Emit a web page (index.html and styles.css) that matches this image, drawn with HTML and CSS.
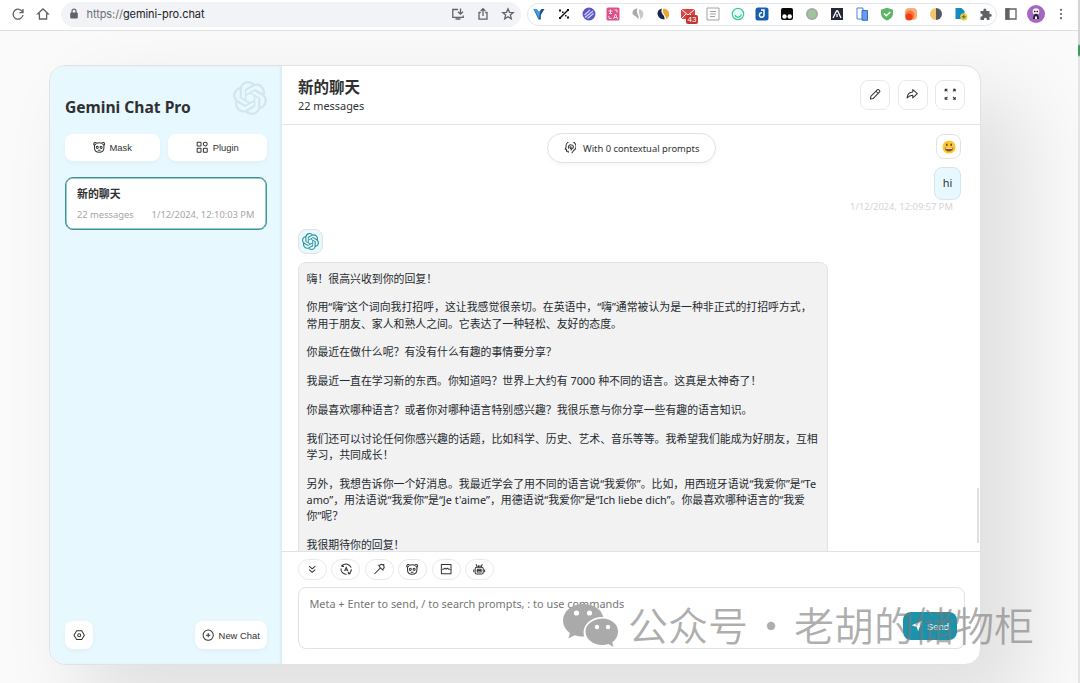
FILE: index.html
```html
<!DOCTYPE html>
<html lang="zh">
<head>
  <meta charset="utf-8">
  <title>Gemini Chat Pro</title>
  <link rel="stylesheet" href="styles.css">
</head>
<body>
  <svg class="sprite" xmlns="http://www.w3.org/2000/svg">
    <symbol id="logo" viewBox="0 0 24 24">
      <path fill="currentColor" d="M22.2819 9.8211a5.9847 5.9847 0 0 0-.5157-4.9108 6.0462 6.0462 0 0 0-6.5098-2.9A6.0651 6.0651 0 0 0 4.9807 4.1818a5.9847 5.9847 0 0 0-3.9977 2.9 6.0462 6.0462 0 0 0 .7427 7.0966 5.98 5.98 0 0 0 .511 4.9107 6.051 6.051 0 0 0 6.5146 2.9001A5.9847 5.9847 0 0 0 13.2599 24a6.0557 6.0557 0 0 0 5.7718-4.2058 5.9894 5.9894 0 0 0 3.9977-2.9001 6.0557 6.0557 0 0 0-.7475-7.0729zm-9.022 12.6081a4.4755 4.4755 0 0 1-2.8764-1.0408l.1419-.0804 4.7783-2.7582a.7948.7948 0 0 0 .3927-.6813v-6.7369l2.02 1.1686a.071.071 0 0 1 .038.052v5.5826a4.504 4.504 0 0 1-4.4945 4.4944zm-9.6607-4.1254a4.4708 4.4708 0 0 1-.5346-3.0137l.142.0852 4.783 2.7582a.7712.7712 0 0 0 .7806 0l5.8428-3.3685v2.3324a.0804.0804 0 0 1-.0332.0615L9.74 19.9502a4.4992 4.4992 0 0 1-6.1408-1.6464zM2.3408 7.8956a4.485 4.485 0 0 1 2.3655-1.9728V11.6a.7664.7664 0 0 0 .3879.6765l5.8144 3.3543-2.0201 1.1685a.0757.0757 0 0 1-.071 0l-4.8303-2.7865A4.504 4.504 0 0 1 2.3408 7.872zm16.5963 3.8558L13.1038 8.364 15.1192 7.2a.0757.0757 0 0 1 .071 0l4.8303 2.7913a4.4944 4.4944 0 0 1-.6765 8.1042v-5.6772a.79.79 0 0 0-.407-.667zm2.0107-3.0231l-.142-.0852-4.7735-2.7818a.7759.7759 0 0 0-.7854 0L9.409 9.2297V6.8974a.0662.0662 0 0 1 .0284-.0615l4.8303-2.7866a4.4992 4.4992 0 0 1 6.6802 4.66zM8.3065 12.863l-2.02-1.1638a.0804.0804 0 0 1-.038-.0567V6.0742a4.4992 4.4992 0 0 1 7.3757-3.4537l-.142.0805L8.704 5.459a.7948.7948 0 0 0-.3927.6813zm1.0976-2.3654l2.602-1.4998 2.6069 1.4998v2.9994l-2.5974 1.4997-2.6067-1.4997Z"/>
    </symbol>
    <symbol id="mask" viewBox="0 0 16 16">
      <path d="M1.900 5.500C.3 4.300 1 1.800 2.900 1.800c1 0 1.600.5 1.900 1 2-.8 4.400-.8 6.400 0 .3-.5.9-1 1.900-1 1.900 0 2.600 2.500 1 3.700M1.900 5.500v3.200c0 3.600 2.800 5.800 6.100 5.800s6.100-2.200 6.100-5.800V5.500M1.900 5.500l1.800-1.700M14.100 5.500l-1.800-1.700"/>
      <path d="M4.200 8.500c0-1 .6-1.600 1.400-1.600S6.900 7.500 6.800 8.300c-.1.900-.8 1.300-1.500 1.300-.6 0-1.100-.4-1.100-1.100zM11.800 8.500c0-1-.6-1.600-1.400-1.600S9.100 7.500 9.200 8.300c.1.900.8 1.300 1.500 1.300.6 0 1.100-.4 1.100-1.100zM6.300 11.800h3.400"/>
    </symbol>
  </svg>

  <header class="browser-bar">
    <svg class="bar-icon" viewBox="0 0 14 14"><path d="M11.700 5.300A5 5 0 1 0 12 8M12 2v3.600H8.400"/></svg>
    <svg class="bar-icon" viewBox="0 0 14 14"><path d="M1.800 6.800 7 2l5.200 4.800H10.600V12H3.400V6.800z"/></svg>
    <div class="omnibox">
      <svg class="lock" viewBox="0 0 10 12"><rect x="1.200" y="4.500" width="7.600" height="6" rx="1" fill="#5f6368"/><path d="M3 5V3.200a2 2 0 0 1 4 0V5" fill="none" stroke="#5f6368" stroke-width="1.200"/></svg>
      <span class="url"><span>https://</span>gemini-pro.chat</span>
      <div class="omnibox-icons">
        <svg class="bar-icon" viewBox="0 0 14 14"><path d="M7 2.500H1.800v7.800h10.400V8.500M4.500 12h5M9.500 1.500v5.300M7 4.700l2.500 2.500L12 4.700"/></svg>
        <svg class="bar-icon" viewBox="0 0 14 14"><path d="M4.800 5.500H3v6.700h8V5.500H9.200M7 9V1.800M4.700 4 7 1.700 9.300 4"/></svg>
        <svg class="bar-icon" viewBox="0 0 14 14"><path d="m7 1.800 1.500 3.500 3.800.3-2.900 2.500.9 3.700L7 9.800l-3.300 2 .9-3.700-2.900-2.500 3.800-.3z"/></svg>
      </div>
    </div>
    <div class="extensions">
      <svg viewBox="0 0 14 14"><path d="M1.500 2h3L7 5l2.500-3h3L8.800 8v4.500H6.500z" fill="#1d4f8c"/><path d="M1.500 2h3L7 5l2-2.400L7.500 8 7 12.500 5 8z" fill="#3f9de0"/></svg>
      <svg viewBox="0 0 14 14"><path d="m3 11 8-8" stroke="#111" stroke-width="1.500"/><path d="M2 2.500h2v2H2zM10 9.500h2v2h-2zM10 2h2v2h-2zM2 10h2v2H2zM5 4.500h1.500V6H5zM8 8h1.500v1.500H8z" fill="#111"/></svg>
      <svg viewBox="0 0 14 14"><circle cx="7" cy="7" r="6.500" fill="#5b55c8"/><path d="m2.500 8 5.500-5M3 10.500 11 4M5.500 11.500l6-5" stroke="#d9d6ff" stroke-width="1.100"/></svg>
      <svg viewBox="0 0 14 14"><rect x=".5" y=".5" width="13" height="13" rx="1.500" fill="#dc5288"/><path d="M2.500 4h4M4.500 2.500V7M3 6.500h3M8.500 3H11v2.500M3 9v2.500h2.500M7.500 12l2-5 2 5M8.200 10.500h2.600" stroke="#fbdbe8" fill="none"/></svg>
      <svg viewBox="0 0 14 14"><path d="M6.500 1.500C3 1.500 1.500 4 1.500 6c0 3 5 2.500 5.500 6.500C9.500 8.500 4 6.500 6.500 1.500z" fill="#aaa"/><path d="M8.500 2c4.500 1 5.500 8 .5 10.500 1.500-4.500-3-6-.5-10.500z" fill="#c8c8c8"/></svg>
      <svg viewBox="0 0 14 14"><path d="M6 1.500C3 2 1.500 4 1.500 6.500c0 3 3 6 7 6C9.500 8 3.500 6.500 6 1.500z" fill="#18264d"/><path d="M7.500 1.500c6.500.5 7.500 8.500 2.500 10.500C10.500 8 5 6.500 7.500 1.500z" fill="#eba62f"/></svg>
      <span class="mail">
        <svg viewBox="0 0 14 14"><path d="M0 2h14v10H0z" fill="#df4540"/><path d="m0 2 7 6 7-6M0 12l5-5M14 12 9 7" stroke="#fff" fill="none"/></svg>
        <b>43</b>
      </span>
      <svg viewBox="0 0 14 14"><path d="M1 1h12v12H1zM4 4.500h6M4 7h6M4 9.500h5" stroke="#a2a2a2" fill="none"/></svg>
      <svg viewBox="0 0 14 14"><circle cx="7" cy="7" r="5.700" fill="#ecfff8" stroke="#3bc99b" stroke-width="1.200"/><path d="M4 8c1 3 5 3 6.500-.5" stroke="#3bc99b" fill="none" stroke-width="1.400"/></svg>
      <svg viewBox="0 0 14 14"><rect x=".5" y=".5" width="13" height="13" rx="2.500" fill="#155fae"/><path d="M6 3h3v5a2.300 2.300 0 1 1-2-2.300" stroke="#fff" stroke-width="1.500" fill="none"/></svg>
      <svg viewBox="0 0 14 14"><rect x="1" y="1" width="12" height="12" rx="2" fill="#090909"/><circle cx="4.500" cy="9.500" r="2.200" fill="#fff"/><circle cx="9.700" cy="9.500" r="2.200" fill="#fff"/></svg>
      <svg viewBox="0 0 14 14"><circle cx="7" cy="7" r="6" fill="#a8aaa8"/><circle cx="7" cy="7" r="4" fill="#a0c59b"/></svg>
      <svg viewBox="0 0 14 14"><path d="M1 1h12v12H1z" fill="#222938"/><path d="m3 11 3.500-7h1.200l3.300 7M7 7v3" stroke="#fff" stroke-width="1.300" fill="none"/></svg>
      <svg viewBox="0 0 14 14"><path d="M2 1h6v11H2z" fill="#fff" stroke="#4e80d8"/><path d="M7 3.500h5.500v9.800H7z" fill="#679eed" stroke="#376bc4"/></svg>
      <svg viewBox="0 0 14 14"><path d="m7 .8 6 2V6c0 4-2.500 6-6 7.500C3.500 12 1 10 1 6V2.800z" fill="#5db568"/><path d="m4 6.500 2.300 2.300L10.300 5" stroke="#fff" stroke-width="1.500" fill="none"/></svg>
      <svg viewBox="0 0 14 14"><rect x="1" y="1" width="12" height="12" rx="4" fill="#f8ac7b"/><circle cx="6" cy="8" r="4.500" fill="#ff733f"/><circle cx="5" cy="10" r="3.500" fill="#ed3d12"/></svg>
      <svg viewBox="0 0 14 14"><path d="M7 1a6 6 0 0 0 0 12z" fill="#f3c66c"/><path d="M7 1a6 6 0 0 1 0 12z" fill="#55585d"/></svg>
      <svg viewBox="0 0 14 14"><path d="M1.500 1h6l3 3v8h-9z" fill="#168bbd"/><circle cx="9.800" cy="9.800" r="3.600" fill="#e4cf47"/><path d="M9.800 7.800v4M7.800 9.800h4" stroke="#536b37"/></svg>
      <svg viewBox="0 0 14 14"><path d="M1.500 4h3c-1-3.500 3.600-3.500 2.800 0h3.200v3c3-.8 3 3.300 0 2.700V13H7.800c.5-3-3.300-3-2.800 0H1.500V9.500c2.800.6 2.800-3.300 0-2.700z" fill="#5f6368"/></svg>
    </div>
    <svg class="bar-icon" viewBox="0 0 14 14"><path d="M2 2h10v10H2z"/><path d="M2 2h3v10H2z" fill="#5f6368"/></svg>
    <svg class="avatar" viewBox="0 0 18 18"><circle cx="9" cy="9" r="9" fill="#a567c3"/><circle cx="9" cy="6.500" r="3.300" fill="#eee"/><path d="M6 14c0-7 6-7 6 0z" fill="#252129"/><path d="M8 11.500h2V14H8z" fill="#fff"/><circle cx="7.800" cy="6.500" r=".8"/><circle cx="10.300" cy="6.500" r=".8"/></svg>
    <svg class="bar-icon" viewBox="0 0 14 14"><g fill="#5f6368" stroke="none"><circle cx="7" cy="2.800" r="1.100"/><circle cx="7" cy="7" r="1.100"/><circle cx="7" cy="11.200" r="1.100"/></g></svg>
  </header>

  <main class="page">
    <div class="window">
      <aside class="sidebar">
        <div class="sidebar-header">
          <h1>Gemini Chat Pro</h1>
          <svg class="sidebar-logo"><use href="#logo"/></svg>
        </div>
        <div class="sidebar-bar">
          <button class="mask-button"><svg class="icon"><use href="#mask"/></svg>Mask</button>
          <button class="plugin-button"><svg class="icon" viewBox="0 0 16 16"><rect x="1.500" y="1.500" width="5" height="5" rx=".6"/><circle cx="12" cy="4" r="2.500"/><rect x="1.500" y="9.500" width="5" height="5" rx=".6"/><rect x="9.500" y="9.500" width="5" height="5" rx=".6"/></svg>Plugin</button>
        </div>
        <div class="chat-item">
          <div class="chat-item-title">新的聊天</div>
          <div class="chat-item-info"><span>22 messages</span><span>1/12/2024, 12:10:03 PM</span></div>
        </div>
        <div class="sidebar-tail">
          <button class="settings"><svg class="icon" viewBox="0 0 16 16"><path d="M4.700 2.300h6.600L14.700 8l-3.400 5.700H4.700L1.300 8z"/><circle cx="8" cy="8" r="2"/></svg></button>
          <button class="new-chat"><svg class="icon" viewBox="0 0 16 16"><circle cx="8" cy="8" r="6.600"/><path d="M8 5.200v5.600M5.200 8h5.600"/></svg>New Chat</button>
        </div>
      </aside>

      <section class="chat">
        <div class="chat-header">
          <div>
            <h2>新的聊天</h2>
            <p>22 messages</p>
          </div>
          <div class="actions">
            <button><svg class="icon" viewBox="0 0 16 16"><path d="m1.800 14.200.6-3.500 8.500-8.500c.5-.5 1-.5 1.500 0l1.400 1.400c.5.5.5 1 0 1.500l-8.500 8.500zM9 4.200 11.800 7"/></svg></button>
            <button><svg class="icon" viewBox="0 0 16 16"><path d="M8.700 2v3.200C4 5.500 1.700 8.700 1.400 13c2-2.600 4-3.500 7.300-3.500v3.300l6-5.400z"/></svg></button>
            <button><svg class="icon" viewBox="0 0 16 16"><path d="M1.500 4.500v-3h3M11.500 1.500h3v3M14.500 11.500v3h-3M4.500 14.500h-3v-3M1.500 1.500l3 3M14.500 1.500l-3 3M14.500 14.500l-3-3M1.500 14.500l3-3"/></svg></button>
          </div>
        </div>

        <div class="chat-body">
          <button class="context-prompts"><svg class="icon" viewBox="0 0 16 16"><path d="M5.500 14v-2H3.200V9.500H1.500l1.200-3A6.400 6.400 0 1 1 12.500 11L10 14.500"/><path d="M8.800 11 11 7.500M6 8.500C4.500 5 7.500 3.300 9 3.500c4 .2 4 4.500 1.500 5C8 9 7 7.500 8 6l2 1"/></svg>With 0 contextual prompts</button>
          <div class="user-message">
            <div class="user-avatar">
              <svg viewBox="0 0 16 16"><circle cx="8" cy="8" r="7.500" fill="#fbc738"/><ellipse cx="5.500" cy="5.500" rx=".9" ry="1.600" fill="#643b14"/><ellipse cx="10.500" cy="5.500" rx=".9" ry="1.600" fill="#643b14"/><path d="M3 8.500c3 .8 7 .8 10 0 0 6-10 6-10 0z" fill="#8a5318"/><path d="M4 9c2.500.6 5.500.6 8 0v.9c-2.500.5-5.500.5-8 0z" fill="#fff"/></svg>
            </div>
            <div class="user-text">hi</div>
            <div class="message-date">1/12/2024, 12:09:57 PM</div>
          </div>
          <div class="bot-avatar"><svg><use href="#logo"/></svg></div>
          <div class="bot-text">
            <p>嗨！很高兴收到你的回复！</p>
            <p>你用“嗨”这个词向我打招呼，这让我感觉很亲切。在英语中，“嗨”通常被认为是一种非正式的打招呼方式，<br>常用于朋友、家人和熟人之间。它表达了一种轻松、友好的态度。</p>
            <p>你最近在做什么呢？有没有什么有趣的事情要分享？</p>
            <p>我最近一直在学习新的东西。你知道吗？世界上大约有 7000 种不同的语言。这真是太神奇了！</p>
            <p>你最喜欢哪种语言？或者你对哪种语言特别感兴趣？我很乐意与你分享一些有趣的语言知识。</p>
            <p>我们还可以讨论任何你感兴趣的话题，比如科学、历史、艺术、音乐等等。我希望我们能成为好朋友，互相<br>学习，共同成长！</p>
            <p>另外，我想告诉你一个好消息。我最近学会了用不同的语言说“我爱你”。比如，用西班牙语说“我爱你”是“Te<br>amo”，用法语说“我爱你”是“Je t'aime”，用德语说“我爱你”是“Ich liebe dich”。你最喜欢哪种语言的“我爱<br>你”呢？</p>
            <p>我很期待你的回复！</p>
          </div>
          <div class="scrollbar"></div>
        </div>

        <div class="input-panel">
          <div class="input-actions">
            <button><svg class="icon" viewBox="0 0 16 16"><path d="m4 4 4 3.500L12 4M4 8.500 8 12l4-3.500"/></svg></button>
            <button><svg class="icon" viewBox="0 0 16 16"><path d="M2.500 4.300a6.600 6.600 0 0 1 11.800 1.800M14.600 8a6.600 6.600 0 0 1-3.800 6M8.500 14.600A6.600 6.600 0 0 1 1.400 7M2.500 1.800v2.700h2.700M13.600 13.800h-2.800v-2.500M5.900 10.500 8 5.300l2.100 5.200M6.600 9h2.800"/></svg></button>
            <button><svg class="icon" viewBox="0 0 16 16"><path d="m1.800 14.200 7.500-7.500M8 4.500A3.200 3.200 0 1 1 11.500 8.300M8 4.500l3.500 3.800M10.500 1v1.200M6.300 2.500l.9.900M14.500 1.500l-1 1M15 5.800h-1.200M13.500 9.700l-.9-.9"/></svg></button>
            <button><svg class="icon"><use href="#mask"/></svg></button>
            <button><svg class="icon" viewBox="0 0 16 16"><path d="M1.800 7V2h12.400v5M1.800 9v5h12.400V9M.8 8h4l1.600-1.200L8 8l1.600-1.200L11.200 8h4"/></svg></button>
            <button><svg class="icon" viewBox="0 0 16 16"><rect x="2.800" y="5.500" width="10.400" height="8.700" rx="2"/><path d="M5.500 5.500 4 1.500M10.500 5.500l1.500-4M7.200 5.500V3M9 5.500V3M1 8.500v3.500M15 8.500v3.500M5.500 8h5v3.500h-5zM5.500 9.700h5"/></svg></button>
          </div>
          <div class="input-box">
            <span>Meta + Enter to send, / to search prompts, : to use commands</span>
            <button class="send"><svg viewBox="0 0 16 16"><path d="M1 7 15 1 9.500 15 7.500 9z" fill="#fff"/></svg>Send</button>
          </div>
        </div>
      </section>
    </div>
  </main>

  <div class="watermark">
    <svg viewBox="0 0 56 46"><path d="M21 1C9.500 1 1 8.500 1 17.500c0 5 2.800 9.500 7 12.500l-1.700 5.500 6.500-3.300c2.500.8 5 1.300 8 1.300h1.500C19 24 28 13.200 41.300 14 39.500 6 31 1 21 1z"/><path d="M56 28.500C56 21 49 15.500 40.500 15.500S23.500 21 23.500 28.500s7.500 13.500 17 13.500c2.200 0 4.200-.3 6-.9l5 3-1.300-4.800c3.500-2.500 5.800-6.500 5.800-10.800z"/><g fill="#fff"><circle cx="14.500" cy="10" r="2.600"/><circle cx="27.500" cy="10" r="2.600"/><circle cx="35" cy="24" r="2.200"/><circle cx="46" cy="24" r="2.200"/></g></svg>
    <span>公众号</span><i>·</i><span>老胡的储物柜</span>
  </div>
  <div class="page-edge"></div>
</body>
</html>
```
FILE: styles.css
```css
:root {
  --primary: #1d93ab;
  --second: #e7f8ff;
  --text: #303030;
  --border: #e2e2e2;
  --shadow: 0 2px 4px rgba(0, 0, 0, 0.04);
  --font: "Noto Sans", "Noto Sans CJK SC", sans-serif;
}

* {
  margin: 0;
  padding: 0;
  box-sizing: border-box;
}

body {
  display: flex;
  flex-direction: column;
  width: 1080px;
  height: 683px;
  overflow: hidden;
  position: relative;
  font-family: var(--font);
  color: var(--text);
  background: #fafafa;
}

button {
  display: flex;
  align-items: center;
  justify-content: center;
  font-family: "Liberation Sans", Arial, sans-serif;
  font-size: 9.4px;
  color: var(--text);
  background: #fff;
  border: none;
  border-radius: 8px;
}

.sprite {
  position: absolute;
  width: 0;
  height: 0;
}

.icon {
  width: 12.4px;
  height: 12.4px;
  flex: none;
  fill: none;
  stroke: #333;
  stroke-width: 1.3;
  stroke-linejoin: round;
}

/* browser toolbar */
.browser-bar {
  display: flex;
  align-items: center;
  height: 31px;
  flex: none;
  padding: 0 12px 2px 11px;
  background: #fff;
  border-bottom: 1px solid #dde1e3;
}

.bar-icon {
  width: 14px;
  height: 14px;
  flex: none;
  fill: none;
  stroke: #5f6368;
  stroke-width: 1.3;
  margin-right: 11px;
}

.omnibox {
  display: flex;
  align-items: center;
  width: 460px;
  height: 25px;
  padding: 0 6px 0 8px;
  background: #f2f3f7;
  border-radius: 13px;
}

.lock {
  width: 10px;
  height: 12px;
  margin-right: 7.5px;
}

.url {
  font: 11px Inter, sans-serif;
  color: #202124;
  letter-spacing: -0.08px;
}

.url span {
  color: #6b6f74;
}

.omnibox-icons {
  display: flex;
  gap: 11px;
  margin-left: auto;
}

.omnibox-icons .bar-icon {
  margin: 0;
}

.extensions {
  display: flex;
  align-items: center;
  justify-content: space-between;
  width: 470px;
  height: 23px;
  margin: 0 7px 0 6px;
  padding: 0 3px 0 4px;
  border: 1px solid #e2e5ea;
  border-radius: 12px;
}

.extensions svg {
  display: block;
  width: 14px;
  height: 14px;
}

.mail {
  position: relative;
}

.mail b {
  position: absolute;
  left: 5px;
  top: 8px;
  padding: 0 1.5px;
  font: 8px/9px "Liberation Sans", sans-serif;
  color: #fff;
  background: #c5352f;
  border-radius: 2px;
}

.avatar {
  width: 18px;
  height: 18px;
  flex: none;
  margin: 0 9px 0 -2px;
}

.browser-bar > .bar-icon:last-child {
  margin: 0;
}

/* app window */
.page {
  flex: 1;
  min-height: 0;
  padding: 34px 0 0 49px;
  overflow: hidden;
}

.window {
  display: flex;
  width: 932px;
  height: 600px;
  border: 1px solid var(--border);
  border-radius: 16px;
  background: #fff;
  box-shadow: 39px 39px 78px 8px rgba(0, 0, 0, 0.1);
  overflow: hidden;
}

.sidebar {
  display: flex;
  flex-direction: column;
  width: 232px;
  padding: 15px;
  background: var(--second);
  box-shadow: inset -2px 0 2px rgba(0, 0, 0, 0.05);
}

.sidebar-header {
  display: flex;
  justify-content: space-between;
  height: 53px;
}

.sidebar-header h1 {
  padding-top: 15px;
  font-size: 15.6px;
  line-height: 22px;
  font-weight: 700;
}

.sidebar-logo {
  width: 34px;
  height: 34px;
  color: #d3e6ed;
}

.sidebar-bar {
  display: flex;
  gap: 8px;
  margin-bottom: 16px;
}

.sidebar-bar button {
  height: 27px;
  gap: 4px;
  box-shadow: var(--shadow);
}

.mask-button {
  width: 95px;
}

.plugin-button {
  flex: 1;
}

.chat-item {
  height: 53px;
  padding: 8px 11.5px 8px 11px;
  background: #fff;
  border: 1px solid #3c9396;
  border-radius: 8px;
  box-shadow: inset 0 0 0 0.5px #3c9396;
}

.chat-item-title {
  font-size: 10.9px;
  line-height: 16px;
  font-weight: 700;
}

.chat-item-info {
  display: flex;
  justify-content: space-between;
  margin-top: 6px;
  font-size: 9.35px;
  line-height: 13px;
  color: #a6a6a6;
  white-space: nowrap;
}

.sidebar-tail {
  display: flex;
  justify-content: space-between;
  margin-top: auto;
}

.sidebar-tail button {
  height: 28px;
  box-shadow: var(--shadow);
}

.settings {
  width: 28px;
}

.new-chat {
  width: 72px;
  gap: 4px;
}

/* chat column */
.chat {
  display: flex;
  flex-direction: column;
  flex: 1;
  min-width: 0;
}

.chat-header {
  display: flex;
  align-items: center;
  justify-content: space-between;
  height: 59px;
  flex: none;
  padding: 0 15px 1px 16px;
  border-bottom: 1px solid #e5e5e5;
}

.chat-header h2 {
  padding-top: 1px;
  font-size: 15.5px;
  line-height: 21px;
}

.chat-header p {
  font-size: 10.9px;
  line-height: 16px;
}

.actions {
  display: flex;
  gap: 7.5px;
}

.actions button {
  width: 30px;
  height: 30px;
  border: 1px solid #e8e8e8;
}

.chat-body {
  position: relative;
  display: flex;
  flex-direction: column;
  height: 426px;
  flex: none;
  padding: 8px 19px 0 16px;
  overflow: hidden;
}

.context-prompts {
  align-self: center;
  width: 169px;
  height: 30px;
  flex: none;
  gap: 7px;
  margin-left: 4px;
  font-family: var(--font);
  font-size: 9.35px;
  border: 1px solid var(--border);
  border-radius: 15px;
  box-shadow: var(--shadow);
}

.user-message {
  display: flex;
  flex-direction: column;
  align-items: flex-end;
  margin-top: -29px;
}

.user-avatar,
.bot-avatar {
  display: flex;
  align-items: center;
  justify-content: center;
  width: 25px;
  height: 25px;
  flex: none;
  border: 1px solid var(--border);
  border-radius: 8px;
}

.user-avatar svg {
  width: 14px;
  height: 14px;
}

.user-text {
  margin-top: 8px;
  padding: 7px 7.8px 8px;
  font-size: 10.9px;
  line-height: 16px;
  background: var(--second);
  border: 1px solid #d4e5ec;
  border-radius: 8px;
}

.message-date {
  padding-right: 8px;
  font-size: 9.35px;
  line-height: 14px;
  color: #d4d4d4;
}

.bot-avatar {
  margin-top: 15px;
  background: var(--second);
}

.bot-avatar svg {
  width: 17px;
  height: 17px;
  color: #28919a;
}

.bot-text {
  width: 530px;
  flex: none;
  margin-top: 8px;
  padding: 7.6px;
  font-size: 10.88px;
  line-height: 16.33px;
  white-space: nowrap;
  color: #24292f;
  background: #f2f2f2;
  border: 1px solid var(--border);
  border-radius: 8px;
}

.bot-text p {
  margin-bottom: 12.4px;
}

.scrollbar {
  position: absolute;
  right: 1px;
  top: 363px;
  width: 2px;
  height: 55px;
  background: #e0e0e0;
}

.input-panel {
  flex: 1;
  padding: 7px 15px 15px 16px;
  border-top: 1px solid var(--border);
}

.input-actions {
  display: flex;
  gap: 4.4px;
  margin-bottom: 7px;
}

.input-actions button {
  width: 29px;
  height: 21px;
  border: 1px solid #e8e8e8;
  border-radius: 11px;
}

.input-box {
  display: flex;
  align-items: flex-start;
  justify-content: space-between;
  height: 62px;
  padding: 8px 7px 8px 10.5px;
  font-size: 10.88px;
  line-height: 16px;
  color: #757575;
  border: 1px solid var(--border);
  border-radius: 8px;
}

.send {
  align-self: flex-end;
  width: 54px;
  height: 28px;
  gap: 4px;
  color: #fff;
  background: var(--primary);
}

.send svg {
  width: 12px;
  height: 12px;
}

.watermark {
  position: absolute;
  left: 562px;
  top: 599px;
  display: flex;
  align-items: center;
  font: 350 40px/50px "Noto Sans CJK SC", sans-serif;
  color: rgba(120, 120, 120, 0.6);
}

.watermark svg {
  width: 56px;
  height: 46px;
  margin: 3px 10px 0 0;
  fill: #aaa;
}

.watermark i {
  width: 46px;
  font-style: normal;
  text-align: center;
}

.page-edge {
  position: absolute;
  right: 0;
  top: 0;
  width: 2px;
  height: 683px;
  background: linear-gradient(#d5d5d5 44px, #3f9860 46px, #3f9860 55px, #e4e4e4 57px);
}
```
